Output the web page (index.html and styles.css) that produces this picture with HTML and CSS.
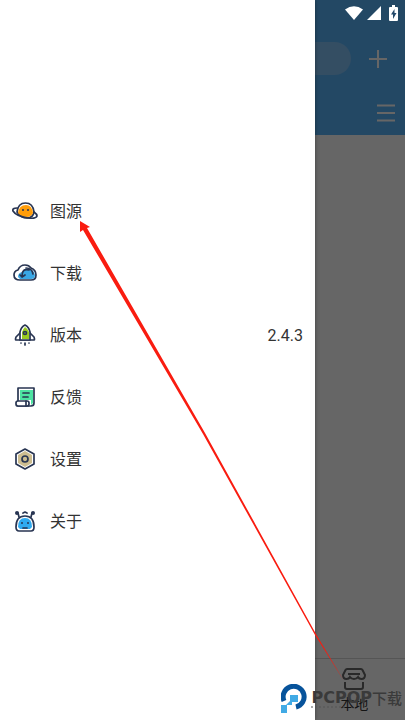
FILE: index.html
```
<!DOCTYPE html>
<html lang="zh-CN">
  <head>
    <meta charset="utf-8">
    <meta name="viewport" content="width=device-width, initial-scale=1">
    <title>图源</title>
    <link rel="stylesheet" href="styles.css">
  </head>
  <body>
    <div class="app">
      <header class="topbar">
        <div class="search-row">
          <input class="search" type="search" aria-label="搜索">
          <button class="icon-btn" aria-label="添加">
            <svg width="20" height="20" viewBox="0 0 20 20"><path d="M10 1v18M1 10h18" /></svg>
          </button>
        </div>
        <div class="tools">
          <button class="icon-btn" aria-label="列表">
            <svg width="18" height="18" viewBox="0 0 18 18"><path d="M0 1.500h18M0 9h18M0 16.500h18" /></svg>
          </button>
        </div>
      </header>
      <main class="content"></main>
      <nav class="tabs">
        <a class="tab" href="#local">
          <svg width="24" height="22" viewBox="0 0 24 22">
            <path d="M5 1h14q1 0 1.500 1L23 7q0 4-3.500 4-2.500 0-3.500-2-1.500 2-4 2T8 9q-1 2-3.500 2Q1 11 1 7l2.500-5Q4 1 5 1zM6 6h12M3 14v5q0 2 2 2h14q2 0 2-2v-5" />
          </svg>
          <span>本地</span>
        </a>
      </nav>
    </div>

    <div class="scrim"></div>

    <!-- status bar -->
    <div class="status">
      <svg width="18" height="14" viewBox="0 0 18 14"><path d="M0 3.500Q9-3 18 3.500L9 14z" /></svg>
      <svg width="14" height="14" viewBox="0 0 14 14"><path d="M14 0v14H0z" /></svg>
      <svg width="9" height="16" viewBox="0 0 9 16">
        <path d="M3 0h3v2h2q1 0 1 1v12q0 1-1 1H1q-1 0-1-1V3q0-1 1-1h2z" />
        <path class="bolt" d="M5.500 4L2 9.500h2V14l3.500-6h-2z" />
      </svg>
    </div>

    <!-- side menu -->
    <aside class="drawer">
      <ul class="menu">
        <li>
          <a class="item" href="#source">
            <svg width="26" height="22" viewBox="0 0 26 22">
              <path class="line" fill="#fff" d="M5 12Q6 3 13.500 3T22 12q-1 6-7 6T5 12z" />
              <path fill="#ff9d0a" d="M6 13q1-8 8-8 6 0 7 8-2 4-6 4-6 0-9-4z" />
              <path class="line" d="M5 8Q0 8 1 11q3 5 15 7 8 1 9-2 0-2-3-4" />
              <circle class="dot" cx="11" cy="10" r="1" />
              <circle class="dot" cx="16" cy="10" r="1" />
            </svg>
            <span>图源</span>
          </a>
        </li>
        <li>
          <a class="item" href="#download">
            <svg width="26" height="22" viewBox="0 0 26 22">
              <path class="line" fill="#fff" d="M8 18q-6 0-6-5 0-4 4-5 2-5 7-5 4 0 6 3 5 2 5 7 0 5-5 5z" />
              <path fill="#39a7e5" d="M6 15q0-4 4-5 3-5 7-3l3 1q3 2 3 5 0 4-4 4H8z" />
              <path class="line" d="M14 6q6 0 7 6M17 8q-7-2-7 6M8 13l2 2 3-2" />
            </svg>
            <span>下载</span>
          </a>
        </li>
        <li>
          <a class="item" href="#version">
            <svg width="26" height="22" viewBox="0 0 26 22">
              <path class="line" fill="#fff" d="M8 9l-4 4q-1 3 0 3h18q1 0 0-3l-4-4" />
              <path class="line" fill="#fff" d="M8 16V8q1-5 5-7 4 2 5 7v8z" />
              <path fill="#9bca21" d="M10 15V8q1-3 3-5 3 2 4 5v7z" />
              <circle class="line" cx="13" cy="9" r="1.500" />
              <path class="line" d="M9 19v0M13 19v2M17 19v0" />
            </svg>
            <span>版本</span>
            <span class="value">2.4.3</span>
          </a>
        </li>
        <li>
          <a class="item" href="#feedback">
            <svg width="26" height="22" viewBox="0 0 26 22">
              <path class="line" fill="#fff" d="M6 15V2h16v15q0 3-3 3H6" />
              <path fill="#4de3a2" d="M8 4h13v13l-2 2V14H8z" />
              <path class="line" d="M11 7h6M11 11h5" />
              <rect class="line" fill="#fff" x="4" y="15" width="13" height="5" rx="2" />
              <path class="line" d="M14 15v5" />
            </svg>
            <span>反馈</span>
          </a>
        </li>
        <li>
          <a class="item" href="#settings">
            <svg width="26" height="22" viewBox="0 0 26 22">
              <path class="line" fill="#fff" d="M13 1l9 5v10l-9 5-9-5V6z" />
              <path fill="#cdbd90" d="M13 3l7 4v8l-7 4-7-4V7z" />
              <circle class="line" cx="13" cy="11" r="3" />
            </svg>
            <span>设置</span>
          </a>
        </li>
        <li>
          <a class="item" href="#about">
            <svg width="26" height="22" viewBox="0 0 26 22">
              <path class="line" fill="#fff" d="M4 17Q4 6 13 6t9 11q0 4-3 4H7q-3 0-3-4z" />
              <path fill="#2faaf0" d="M6 17q0-9 7-9t7 9l-2 2H8z" />
              <path class="line" d="M7 7L6 3M19 7l1-4M11 3l2-1 2 1M11 18h4" />
              <circle class="dot" cx="10" cy="13" r="1" />
              <circle class="dot" cx="16" cy="13" r="1" />
              <circle class="dot" cx="5" cy="3" r="2" />
              <circle class="dot" cx="21" cy="3" r="2" />
            </svg>
            <span>关于</span>
          </a>
        </li>
      </ul>
    </aside>

    <!-- pointer from the tab to the first item -->
    <svg class="pointer" viewBox="0 0 405 720" preserveAspectRatio="none">
      <path d="M80 221l10 6-3 1L205 433 316 634l28 47-29-46L203 434 83 230l-3 2z" />
    </svg>

    <div class="brand">
      <svg width="27" height="30" viewBox="0 0 27 30">
        <path d="M3 17A10.500 10.500 0 1 1 15 23" fill="none" stroke="#07539b" stroke-width="5" />
        <path fill="#41aae5" d="M9 11h8v7h-6v3H6v8H0v-8h5l4-4z" />
      </svg>
      <div class="brand-text">
        <strong>PCPOP<span>下载</span></strong>
        <svg width="34" height="2" viewBox="0 0 34 2"><path d="M0 1h34" /></svg>
      </div>
    </div>
  </body>
</html>
```
FILE: styles.css
```
* {
  box-sizing: border-box;
}
body {
  margin: 0;
  position: relative;
  min-height: 100vh;
  overflow: hidden;
  color: #333;
  font-family: Roboto, "Noto Sans CJK SC", sans-serif;
}
button {
  padding: 0;
  border: 0;
  background: none;
}
a {
  color: inherit;
  text-decoration: none;
}
svg {
  display: block;
  flex: none;
}
.app {
  display: flex;
  flex-direction: column;
  min-height: 100vh;
  background: #fff;
}
.topbar {
  padding: 42px 10px 13px;
  background: #59b4fb;
}
.search-row {
  display: flex;
  align-items: center;
  gap: 17px;
}
.search {
  flex: 1;
  min-width: 0;
  height: 33px;
  border: 0;
  border-radius: 17px;
  background: #82c2f7;
}
.icon-btn svg {
  fill: none;
  stroke: #fff;
  stroke-width: 2;
}
.search-row .icon-btn {
  margin-right: 7px;
}
.tools {
  display: flex;
  justify-content: flex-end;
  padding-top: 29px;
}
.content {
  flex: 1;
}
.tabs {
  display: flex;
  justify-content: flex-end;
  border-top: 1px solid #d5d5d5;
}
.tab {
  width: 25%;
  display: flex;
  flex-direction: column;
  align-items: center;
  gap: 4px;
  padding: 9px 0 6px;
  font-size: 14px;
  line-height: 20px;
}
.tab svg {
  fill: none;
  stroke: #666;
  stroke-width: 2;
}
.scrim {
  position: absolute;
  inset: 0;
  background: rgba(0, 0, 0, 0.6);
}
.status {
  position: absolute;
  top: 5px;
  right: 7px;
  display: flex;
  align-items: center;
  gap: 4px;
  fill: #fff;
}
.status svg:last-child {
  margin-left: 4px;
}
.bolt {
  fill: #24496a;
}
.drawer {
  position: absolute;
  top: 0;
  bottom: 0;
  left: 0;
  width: calc(100% - 90px);
  padding-top: 180px;
  background: #fff;
  box-shadow: 0 0 4px rgba(0, 0, 0, 0.4);
}
.menu {
  margin: 0;
  padding: 0;
  list-style: none;
}
.item {
  display: flex;
  align-items: center;
  gap: 12px;
  height: 62px;
  padding: 0 12px;
  font-size: 16px;
}
.item span {
  padding-bottom: 2px;
}
.item svg {
  fill: none;
}
.item .value {
  margin-left: auto;
  padding-bottom: 0;
}
.line {
  stroke: #283552;
  stroke-width: 1.7;
  stroke-linecap: round;
  stroke-linejoin: round;
}
.dot {
  fill: #283552;
}
.pointer {
  position: absolute;
  inset: 0;
  width: 100%;
  height: 100%;
  fill: #f91c10;
  pointer-events: none;
}
.brand {
  position: absolute;
  right: 3px;
  bottom: 6px;
  display: flex;
  align-items: center;
  gap: 3px;
  color: #3a3a3a;
}
.brand-text strong {
  display: flex;
  align-items: center;
  font: bold 16px/16px "DejaVu Sans", sans-serif;
}
.brand-text span {
  font: 500 15px/16px "Noto Sans CJK SC", sans-serif;
}
.brand-text svg {
  stroke: #555;
  stroke-width: 1;
  stroke-dasharray: 2 2;
}
```
